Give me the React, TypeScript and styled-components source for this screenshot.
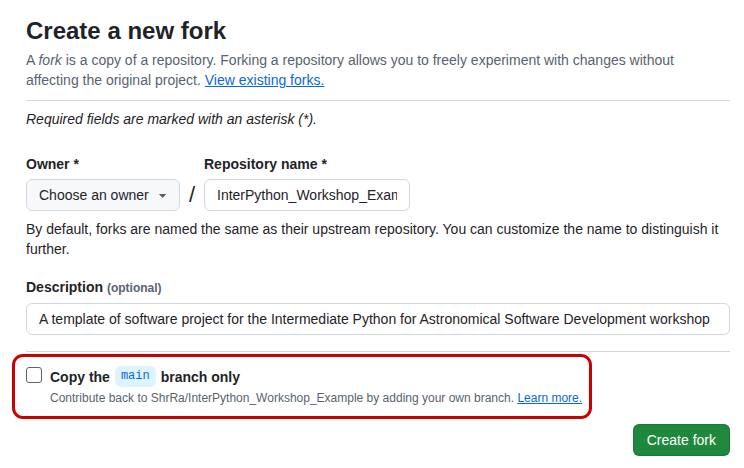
import React from "react";
import styled, { createGlobalStyle } from "styled-components";

const Global = createGlobalStyle`
  html, body { margin: 0; padding: 0; background: #ffffff; }
  body { font-family: "Liberation Sans", Arial, sans-serif; color: #1f2328; font-size: 14px; line-height: 20px; }
  * { box-sizing: border-box; }
`;

const Page = styled.div`
  width: 744px;
  padding: 13px 14px 0 26px;
`;

const Title = styled.h1`
  margin: 0;
  font-size: 24px;
  line-height: 36px;
  font-weight: 700;
  color: #1f2328;
`;

const Lead = styled.p`
  margin: 1px 0 0;
  color: #59636e;
  font-size: 14px;
  line-height: 20px;
`;

const Link = styled.a`
  color: #0969da;
  text-decoration: underline;
`;

const Divider = styled.hr<{ $top: number }>`
  margin: ${(p) => p.$top}px 0 0;
  border: 0;
  border-top: 1px solid #d1d9e0;
  height: 0;
`;

const Note = styled.p`
  margin: 8px 0 0;
  font-style: italic;
  line-height: 20px;
`;

const FieldRow = styled.div`
  display: flex;
  align-items: flex-end;
  margin-top: 25px;
`;

const Field = styled.div`
  display: flex;
  flex-direction: column;
  gap: 5px;
`;

const Label = styled.label`
  font-weight: 700;
  font-size: 14px;
  line-height: 20px;
  color: #1f2328;
`;

const Optional = styled.span`
  font-size: 12px;
  color: #59636e;
  font-weight: 700;
`;

const SelectButton = styled.button`
  display: flex;
  align-items: center;
  gap: 6px;
  height: 32px;
  width: 154px;
  padding: 0 9px 0 12px;
  background: #f6f8fa;
  border: 1px solid #d1d9e0;
  border-radius: 6px;
  font-family: inherit;
  font-size: 14px;
  color: #1f2328;
  white-space: nowrap;
`;

const Slash = styled.span`
  width: 24px;
  height: 32px;
  display: flex;
  align-items: center;
  justify-content: center;
  font-size: 22px;
  color: #1f2328;
`;

const TextInput = styled.div<{ $width?: string }>`
  height: 32px;
  width: ${(p) => p.$width ?? "100%"};
  padding: 0 12px;
  border: 1px solid #d1d9e0;
  border-radius: 6px;
  background: #ffffff;
  display: flex;
  align-items: center;
  font-size: 14px;
  color: #1f2328;
`;

const InputValue = styled.span`
  display: block;
  flex: 1;
  min-width: 0;
  overflow: hidden;
  white-space: nowrap;
`;

const Help = styled.p`
  margin: 8px 0 0;
  line-height: 20px;
  color: #1f2328;
`;

const DescField = styled(Field)`
  margin-top: 18px;
`;

const CheckSection = styled.div`
  position: relative;
  display: flex;
  gap: 8px;
  margin-top: 14px;
`;

const Box = styled.span`
  width: 16px;
  height: 16px;
  margin-top: 1px;
  border: 1px solid #59636e;
  border-radius: 3px;
  background: #fff;
  flex: none;
`;

const CheckText = styled.div`
  display: flex;
  flex-direction: column;
`;

const CheckTitle = styled.div`
  font-weight: 700;
  line-height: 20px;
  height: 21px;
  display: flex;
  align-items: center;
  gap: 5px;
`;

const Code = styled.code`
  font-family: "Liberation Mono", "DejaVu Sans Mono", monospace;
  font-weight: 400;
  font-size: 12px;
  line-height: 21px;
  height: 21px;
  padding: 0 6px;
  border-radius: 6px;
  background: #ddf4ff;
  color: #0969da;
`;

const CheckSub = styled.div`
  font-size: 12px;
  line-height: 18px;
  margin-top: 2px;
  color: #59636e;
`;

const Annotation = styled.div`
  position: absolute;
  left: -14px;
  top: -12px;
  width: 580px;
  height: 65px;
  border: 3px solid #cc0000;
  border-radius: 11px;
  pointer-events: none;
`;

const Footer = styled.div`
  display: flex;
  justify-content: flex-end;
  margin-top: 17px;
`;

const Primary = styled.button`
  height: 32px;
  padding: 0 13px;
  border: 1px solid rgba(31, 35, 40, 0.15);
  border-radius: 6px;
  background: #1f883d;
  color: #ffffff;
  font-family: inherit;
  font-size: 14px;
  font-weight: 500;
`;

const Caret = () => (
  <svg width="16" height="16" viewBox="0 0 16 16" fill="#59636e" aria-hidden>
    <path d="m4.427 7.427 3.396 3.396a.25.25 0 0 0 .354 0l3.396-3.396A.25.25 0 0 0 11.396 7H4.604a.25.25 0 0 0-.177.427Z" />
  </svg>
);

export default function App() {
  return (
    <>
      <Global />
      <Page>
        <Title>Create a new fork</Title>
        <Lead>
          A <em>fork</em> is a copy of a repository. Forking a repository allows you to freely experiment with changes without
          affecting the original project. <Link href="#">View existing forks.</Link>
        </Lead>
        <Divider $top={10} />
        <Note>Required fields are marked with an asterisk (*).</Note>
        <FieldRow>
          <Field>
            <Label>Owner *</Label>
            <SelectButton>
              <span>Choose an owner</span>
              <Caret />
            </SelectButton>
          </Field>
          <Slash>/</Slash>
          <Field>
            <Label>Repository name *</Label>
            <TextInput $width="206px">
              <InputValue>InterPython_Workshop_Example</InputValue>
            </TextInput>
          </Field>
        </FieldRow>
        <Help>
          By default, forks are named the same as their upstream repository. You can customize the name to distinguish it
          further.
        </Help>
        <DescField>
          <Label>
            Description <Optional>(optional)</Optional>
          </Label>
          <TextInput>
            <InputValue>
              A template of software project for the Intermediate Python for Astronomical Software Development workshop
            </InputValue>
          </TextInput>
        </DescField>
        <Divider $top={16} />
        <CheckSection>
          <Box />
          <CheckText>
            <CheckTitle>
              Copy the <Code>main</Code> branch only
            </CheckTitle>
            <CheckSub>
              Contribute back to ShrRa/InterPython_Workshop_Example by adding your own branch.{" "}
              <Link href="#">Learn more.</Link>
            </CheckSub>
          </CheckText>
          <Annotation />
        </CheckSection>
        <Footer>
          <Primary>Create fork</Primary>
        </Footer>
      </Page>
    </>
  );
}
